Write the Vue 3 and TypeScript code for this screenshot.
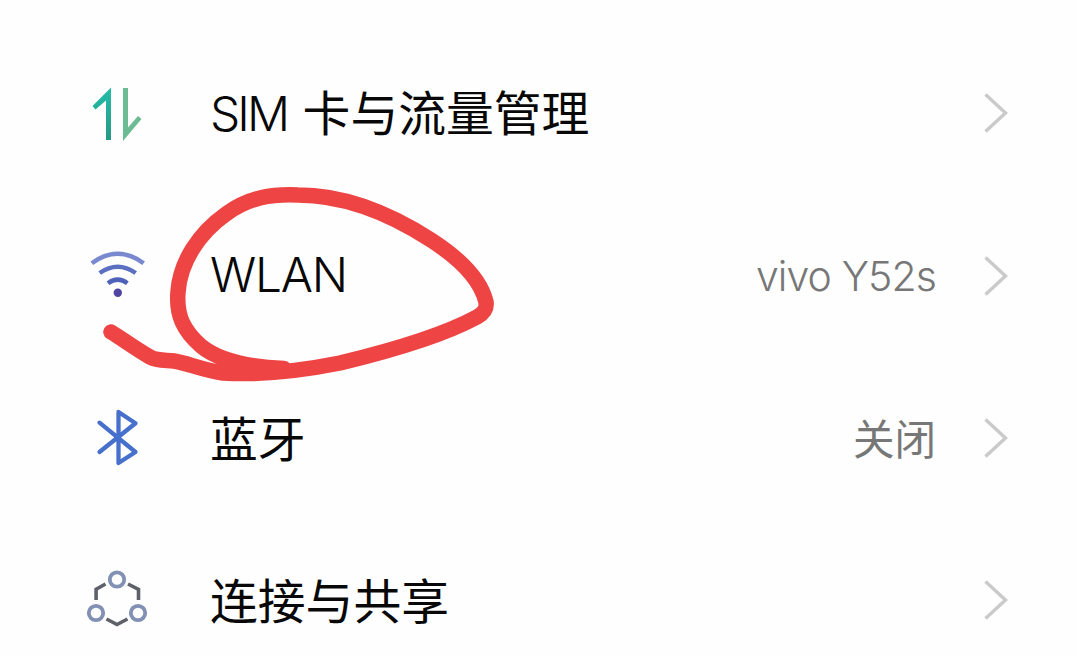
<!--
Network section of the phone settings list, with a hand-drawn marker over the WLAN row.
-->
<script setup lang="ts">
type IconName = 'sim' | 'wifi' | 'bluetooth' | 'share'

interface SettingRow {
  icon: IconName
  latin?: string
  label?: string
  value?: string
  valueLatin?: boolean
}

const rows: SettingRow[] = [
  { icon: 'sim', latin: 'SIM', label: '卡与流量管理' },
  { icon: 'wifi', latin: 'WLAN', value: 'vivo Y52s', valueLatin: true },
  { icon: 'bluetooth', label: '蓝牙', value: '关闭' },
  { icon: 'share', label: '连接与共享' },
]
</script>

<template>
  <main class="settings">
    <div v-for="row in rows" :key="row.icon" class="row">
      <svg v-if="row.icon === 'sim'" class="row__icon" viewBox="0 0 75 75" fill="none">
        <defs>
          <linearGradient id="sim-up" x1="0" y1="0" x2="0" y2="1">
            <stop offset="0" stop-color="#25bda9" />
            <stop offset="1" stop-color="#259985" />
          </linearGradient>
        </defs>
        <path d="M31 11.500V64h-5V24.500L15.500 33.500 12.500 30Z" fill="url(#sim-up)" />
        <path d="M43 12h5v39.500l10-11.500 3.500 3L43 65Z" fill="#6dbb92" />
      </svg>

      <svg v-else-if="row.icon === 'wifi'" class="row__icon" viewBox="0 0 75 75" fill="none">
        <path d="M11.800 25.200Q37.700 6.200 63.600 25.200" stroke="#7988cf" stroke-width="4.500" />
        <path d="M19.700 35Q37.700 22.500 55.700 35" stroke="#5b70c2" stroke-width="4.500" />
        <path d="M28 45.200Q37.700 38 47.400 45.200" stroke="#4d62b8" stroke-width="4.500" />
        <circle cx="37.800" cy="54.800" r="4.200" fill="#5045a5" />
      </svg>

      <svg v-else-if="row.icon === 'bluetooth'" class="row__icon" viewBox="0 0 75 75" fill="none">
        <path
          d="M19.500 22.700 55.500 52 38.500 63V12L55.500 23.300 19.500 52"
          stroke="#4770cd"
          stroke-width="4.300"
          stroke-linecap="round"
          stroke-linejoin="round"
        />
      </svg>

      <svg v-else class="row__icon" viewBox="0 0 75 75" fill="none">
        <g stroke="#5e6169" stroke-width="3.600">
          <path d="M25.500 21 16.100 26.300V37" />
          <path d="M48 21 58.500 26.300V37" />
          <path d="M26.500 56 37 61.500 47.500 56" />
        </g>
        <g stroke="#8190b3" stroke-width="3.800">
          <circle cx="37" cy="16.500" r="7.200" />
          <circle cx="16" cy="50" r="7.200" />
          <circle cx="58" cy="50" r="7.200" />
        </g>
      </svg>

      <div class="row__label">
        <span v-if="row.latin" class="row__latin" :class="`row__latin--${row.icon}`">{{ row.latin }}</span>
        <span v-if="row.label">{{ row.label }}</span>
      </div>

      <span v-if="row.value" class="row__value" :class="{ 'row__value--latin': row.valueLatin }">{{ row.value }}</span>

      <svg class="row__chevron" viewBox="0 0 28 44" fill="none">
        <path d="M3.500 3.500 23.500 22 3.500 40.500" stroke="#cacaca" stroke-width="3.400" />
      </svg>
    </div>

    <!-- marker stroke drawn over the list -->
    <svg class="marker" viewBox="0 0 1078 656" fill="none">
      <path
        d="M284 368.500C248 367 218 360 201 346C184 331 176 316 178 292C180 262 199 233 226 214C249 197 272 194 298 195C350 195 397 218 431 240C462 260 481 281 486 302C487 309 484 313 477 317C440 337 390 351 340 363C300 371 256 375 223 373C202 370 187 363 174 361C166 360 157 361 150 357C136 349 124 340 111 332"
        stroke="#ee4444"
        stroke-width="15.500"
        stroke-linecap="round"
        stroke-linejoin="round"
      />
    </svg>
  </main>
</template>

<style>
body {
  background: #fefefe;
}
</style>

<style scoped>
.settings {
  position: relative;
  box-sizing: border-box;
  width: 1078px;
  height: 656px;
  padding-top: 32px;
  overflow: hidden;
  background: #fefefe;
  font-family: 'Noto Sans CJK SC', sans-serif;
  color: #080808;
}

.row {
  display: flex;
  align-items: center;
  box-sizing: border-box;
  height: 162.4px;
  padding: 0 68px 0 80px;
}

.row__icon {
  flex: none;
  width: 75px;
  height: 75px;
}

.row__label {
  display: flex;
  flex: 1;
  align-items: baseline;
  gap: 15.5px;
  margin-left: 55px;
  padding-bottom: 2px;
  font-size: 47.8px;
  line-height: 70px;
  white-space: nowrap;
}

.row__latin {
  font-family: Inter, sans-serif;
  font-weight: 350;
  letter-spacing: -1.2px;
}
.row__latin--sim {
  letter-spacing: -2.9px;
}

.row__value {
  margin-right: 46px;
  padding-bottom: 1px;
  font-size: 41.5px;
  line-height: 60px;
  color: #777;
  white-space: nowrap;
}
.row__value--latin {
  margin-right: 46px;
  padding-bottom: 0;
  font-family: Inter, sans-serif;
  font-size: 41px;
  font-weight: 350;
  letter-spacing: -0.9px;
}

.row__chevron {
  flex: none;
  width: 28px;
  height: 44px;
}

.marker {
  position: absolute;
  inset: 0;
  width: 1078px;
  height: 656px;
  pointer-events: none;
}
</style>
